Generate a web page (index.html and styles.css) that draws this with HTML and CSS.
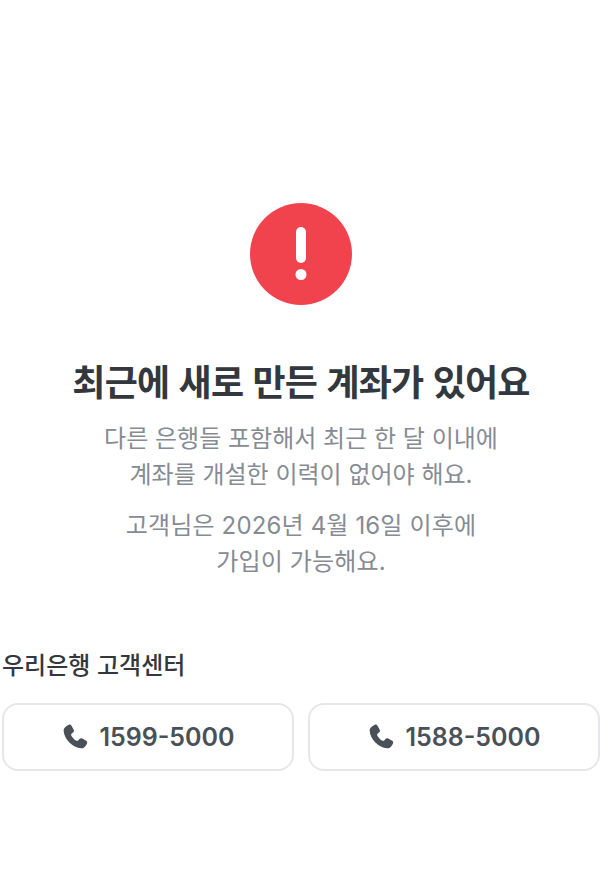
FILE: index.html
```html
<!DOCTYPE html>
<html lang="ko">
<head>
<meta charset="utf-8">
<title>우리은행</title>
<link rel="stylesheet" href="styles.css">
</head>
<body>
<main class="page">
  <section class="notice">
    <svg class="alert" viewBox="0 0 102 102" aria-hidden="true">
      <circle cx="51" cy="51" r="51" fill="#f1434d"/>
      <rect x="46" y="24" width="10" height="36" rx="5" fill="#fff"/>
      <circle cx="51" cy="71.500" r="5.500" fill="#fff"/>
    </svg>
    <h1 class="title">최근에 새로 만든 계좌가 있어요</h1>
    <p class="desc">다른 은행들 포함해서 최근 한 달 이내에<br>계좌를 개설한 이력이 없어야 해요.</p>
    <p class="desc second">고객님은 2026년 4월 16일 이후에<br>가입이 가능해요.</p>
  </section>
  <section class="center">
    <h2 class="center-title">우리은행 고객센터</h2>
    <div class="buttons">
      <a class="call">
        <svg class="phone" viewBox="0 0 24 24" aria-hidden="true"><path d="M6.600 1.600c.9-.5 1.900-.2 2.400.7l1.900 3.400c.4.800.3 1.700-.4 2.300L9 9.300c-.4.400-.4.900-.2 1.400.9 1.800 2.700 3.700 4.500 4.600.5.200 1 .2 1.400-.2l1.300-1.500c.6-.6 1.500-.8 2.300-.3l3.300 2c.9.500 1.100 1.600.6 2.400-.8 1.500-2.200 4-4.700 4C10.300 21.700 2.300 13.500 2.300 6.300c0-2 2.700-3.900 4.300-4.700z"/></svg>
        <span>1599-5000</span>
      </a>
      <a class="call">
        <svg class="phone" viewBox="0 0 24 24" aria-hidden="true"><path d="M6.600 1.600c.9-.5 1.900-.2 2.400.7l1.900 3.400c.4.800.3 1.700-.4 2.300L9 9.300c-.4.400-.4.900-.2 1.400.9 1.800 2.700 3.700 4.500 4.600.5.200 1 .2 1.400-.2l1.300-1.500c.6-.6 1.500-.8 2.300-.3l3.300 2c.9.500 1.100 1.600.6 2.400-.8 1.500-2.200 4-4.700 4C10.300 21.700 2.300 13.500 2.300 6.300c0-2 2.700-3.900 4.300-4.700z"/></svg>
        <span>1588-5000</span>
      </a>
    </div>
  </section>
</main>
</body>
</html>
```
FILE: styles.css
```css
* { box-sizing: border-box; }
html, body { margin: 0; background: #fff; }
body {
  font-family: Inter, "Noto Sans CJK KR", "Noto Sans", sans-serif;
  width: 614px;
  height: 875px;
  overflow: hidden;
}
.page {
  display: flex;
  flex-direction: column;
  padding: 203px 14px 0 2px;
}
.notice {
  display: flex;
  flex-direction: column;
  align-items: center;
}
.alert { width: 102px; height: 102px; display: block; }
.title {
  margin: 51px 0 0;
  font-size: 36px;
  line-height: 48px;
  font-weight: 700;
  color: #33383e;
  letter-spacing: -0.8px;
  font-family: "Noto Sans CJK KR", sans-serif;
}
.desc {
  margin: 17px 0 0;
  font-size: 24px;
  line-height: 36px;
  font-weight: 400;
  color: #868b94;
  text-align: center;
  letter-spacing: 0;
}
.desc.second { margin-top: 15px; letter-spacing: 0.15px; }
.center { margin-top: 66px; }
.center-title {
  margin: 0;
  font-size: 24px;
  line-height: 36px;
  font-weight: 500;
  color: #33383e;
  font-family: "Noto Sans CJK KR", sans-serif;
}
.buttons {
  display: grid;
  grid-template-columns: 1fr 1fr;
  gap: 14px;
  margin-top: 21px;
}
.call {
  height: 68px;
  display: flex;
  align-items: center;
  justify-content: center;
  gap: 10px;
  border: 2px solid #e5e7ea;
  border-radius: 16px;
  background: #fff;
  color: #4a5058;
  font-size: 25px;
  font-weight: 600;
}
.phone { width: 28px; height: 28px; fill: #4a5058; display: block; }
```
